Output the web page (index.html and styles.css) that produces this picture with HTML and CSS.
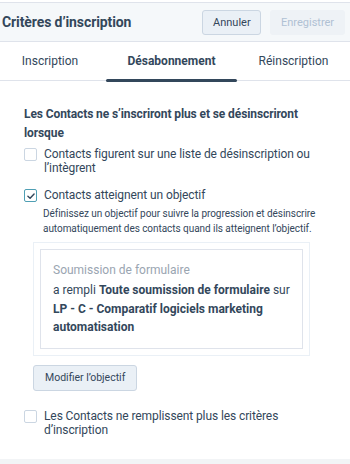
FILE: index.html
```html
<!DOCTYPE html>
<html lang="fr">
<head>
<meta charset="utf-8">
<link rel="stylesheet" href="styles.css">
</head>
<body>
<div class="page">
  <header class="header">
    <h1 class="title">Critères d’inscription</h1>
    <div class="actions">
      <button class="btn btn-cancel">Annuler</button>
      <button class="btn btn-disabled">Enregistrer</button>
    </div>
  </header>
  <nav class="tabs">
    <div class="tab">Inscription</div>
    <div class="tab tab-active">Désabonnement</div>
    <div class="tab">Réinscription</div>
  </nav>
  <main class="content">
    <h2 class="heading">Les Contacts ne s’inscriront plus et se désinscriront lorsque</h2>
    <label class="option">
      <span class="box"></span>
      <span class="option-text">Contacts figurent sur une liste de désinscription ou l’intègrent</span>
    </label>
    <label class="option option-goal">
      <span class="box box-checked"><svg viewBox="0 0 12 12" width="10" height="10"><path d="M2.3 6.2 L4.9 8.6 L9.7 3.5" fill="none" stroke="#33475b" stroke-width="1.7" stroke-linecap="round" stroke-linejoin="round"/></svg></span>
      <span class="option-text">Contacts atteignent un objectif</span>
    </label>
    <p class="desc">Définissez un objectif pour suivre la progression et désinscrire automatiquement des contacts quand ils atteignent l’objectif.</p>
    <div class="goal-outer">
      <div class="goal-inner">
        <div class="goal-label">Soumission de formulaire</div>
        <div class="goal-text">a rempli <b>Toute soumission de formulaire</b> sur <b>LP - C - Comparatif logiciels marketing automatisation</b></div>
      </div>
    </div>
    <button class="btn btn-modify">Modifier l’objectif</button>
    <label class="option option-last">
      <span class="box"></span>
      <span class="option-text">Les Contacts ne remplissent plus les critères d’inscription</span>
    </label>
  </main>
  <div class="footer-strip"></div>
</div>
</body>
</html>
```

FILE: styles.css
```css
html, body {
  margin: 0;
  padding: 0;
  background: #ffffff;
}
body {
  font-family: "Roboto", "Noto Sans", sans-serif;
  color: #33475b;
  width: 350px;
  height: 464px;
  overflow: hidden;
}
.page {
  display: flex;
  flex-direction: column;
  height: 464px;
}
.header {
  margin-top: 2px;
  height: 40px;
  box-sizing: border-box;
  background: #f5f8fa;
  border-top: 1px solid #dfe3eb;
  border-bottom: 1px solid #dfe3eb;
  display: flex;
  align-items: center;
  justify-content: space-between;
  padding: 0 5px 0 2px;
}
.title {
  margin: 0;
  font-size: 14px;
  letter-spacing: -0.1px;
  font-weight: 700;
  color: #33475b;
}
.actions {
  display: flex;
  gap: 9px;
}
.btn {
  font-family: inherit;
  font-size: 11px;
  height: 25px;
  padding: 0 10px;
  border-radius: 3px;
  border: 1px solid #cbd6e2;
  background: #eaf0f6;
  color: #33475b;
}
.btn-cancel {
  width: 59px;
}
.btn-disabled {
  background: #eef2f6;
  border-color: #eef2f6;
  color: #b0c1d4;
  width: 75px;
}
.tabs {
  display: flex;
  height: 39px;
  border-bottom: 1px solid #dfe3eb;
  box-sizing: border-box;
  align-items: stretch;
}
.tab {
  display: flex;
  align-items: center;
  justify-content: center;
  font-size: 12px;
  color: #33475b;
  position: relative;
}
.tab:nth-child(1) { width: 100px; }
.tab:nth-child(2) { width: 131px; margin-left: 6px; }
.tab:nth-child(3) { flex: 1; }
.tab-active {
  font-weight: 700;
}
.tab-active::after {
  content: "";
  position: absolute;
  left: 0;
  right: 0;
  bottom: -2px;
  height: 3px;
  border-radius: 2px;
  background: #33475b;
}
.content {
  padding: 24px 24px 0 24px;
  flex: 1;
}
.heading {
  margin: 0 0 4px;
  font-size: 12px;
  letter-spacing: -0.1px;
  font-weight: 700;
  line-height: 19px;
  color: #33475b;
}
.option {
  display: flex;
  align-items: flex-start;
  gap: 7px;
  font-size: 12px;
  letter-spacing: -0.1px;
  line-height: 14px;
}
.box {
  flex: none;
  width: 11px;
  height: 11px;
  border: 1px solid #cbd6e2;
  border-radius: 2px;
  background: #fff;
  margin-top: 1px;
  display: flex;
  align-items: center;
  justify-content: center;
}
.box-checked {
  border-color: #4f9fb4;
  border-width: 1.5px;
}
.option-text {
  width: 275px;
}
.option-goal {
  margin-top: 13px;
}
.desc {
  margin: 4px 0 0 19px;
  font-size: 10px;
  letter-spacing: -0.05px;
  line-height: 15px;
  color: #33475b;
}
.goal-outer {
  margin: 6px 16px 0 9px;
  border: 1px solid #eaf0f6;
  padding: 6px 6px;
}
.goal-inner {
  border: 1px solid #dfe3eb;
  padding: 12px 12px 11px 12px;
}
.goal-label {
  font-size: 12px;
  color: #9aa5b1;
  line-height: 16px;
}
.goal-text {
  margin-top: 3px;
  font-size: 12px;
  line-height: 18.5px;
}
.btn-modify {
  margin: 9px 0 0 9px;
  height: 26px;
  padding: 0 11px;
  font-size: 10.5px;
}
.option-last {
  margin-top: 18px;
}
.footer-strip {
  height: 5px;
  background: #f2f4f6;
}
```
